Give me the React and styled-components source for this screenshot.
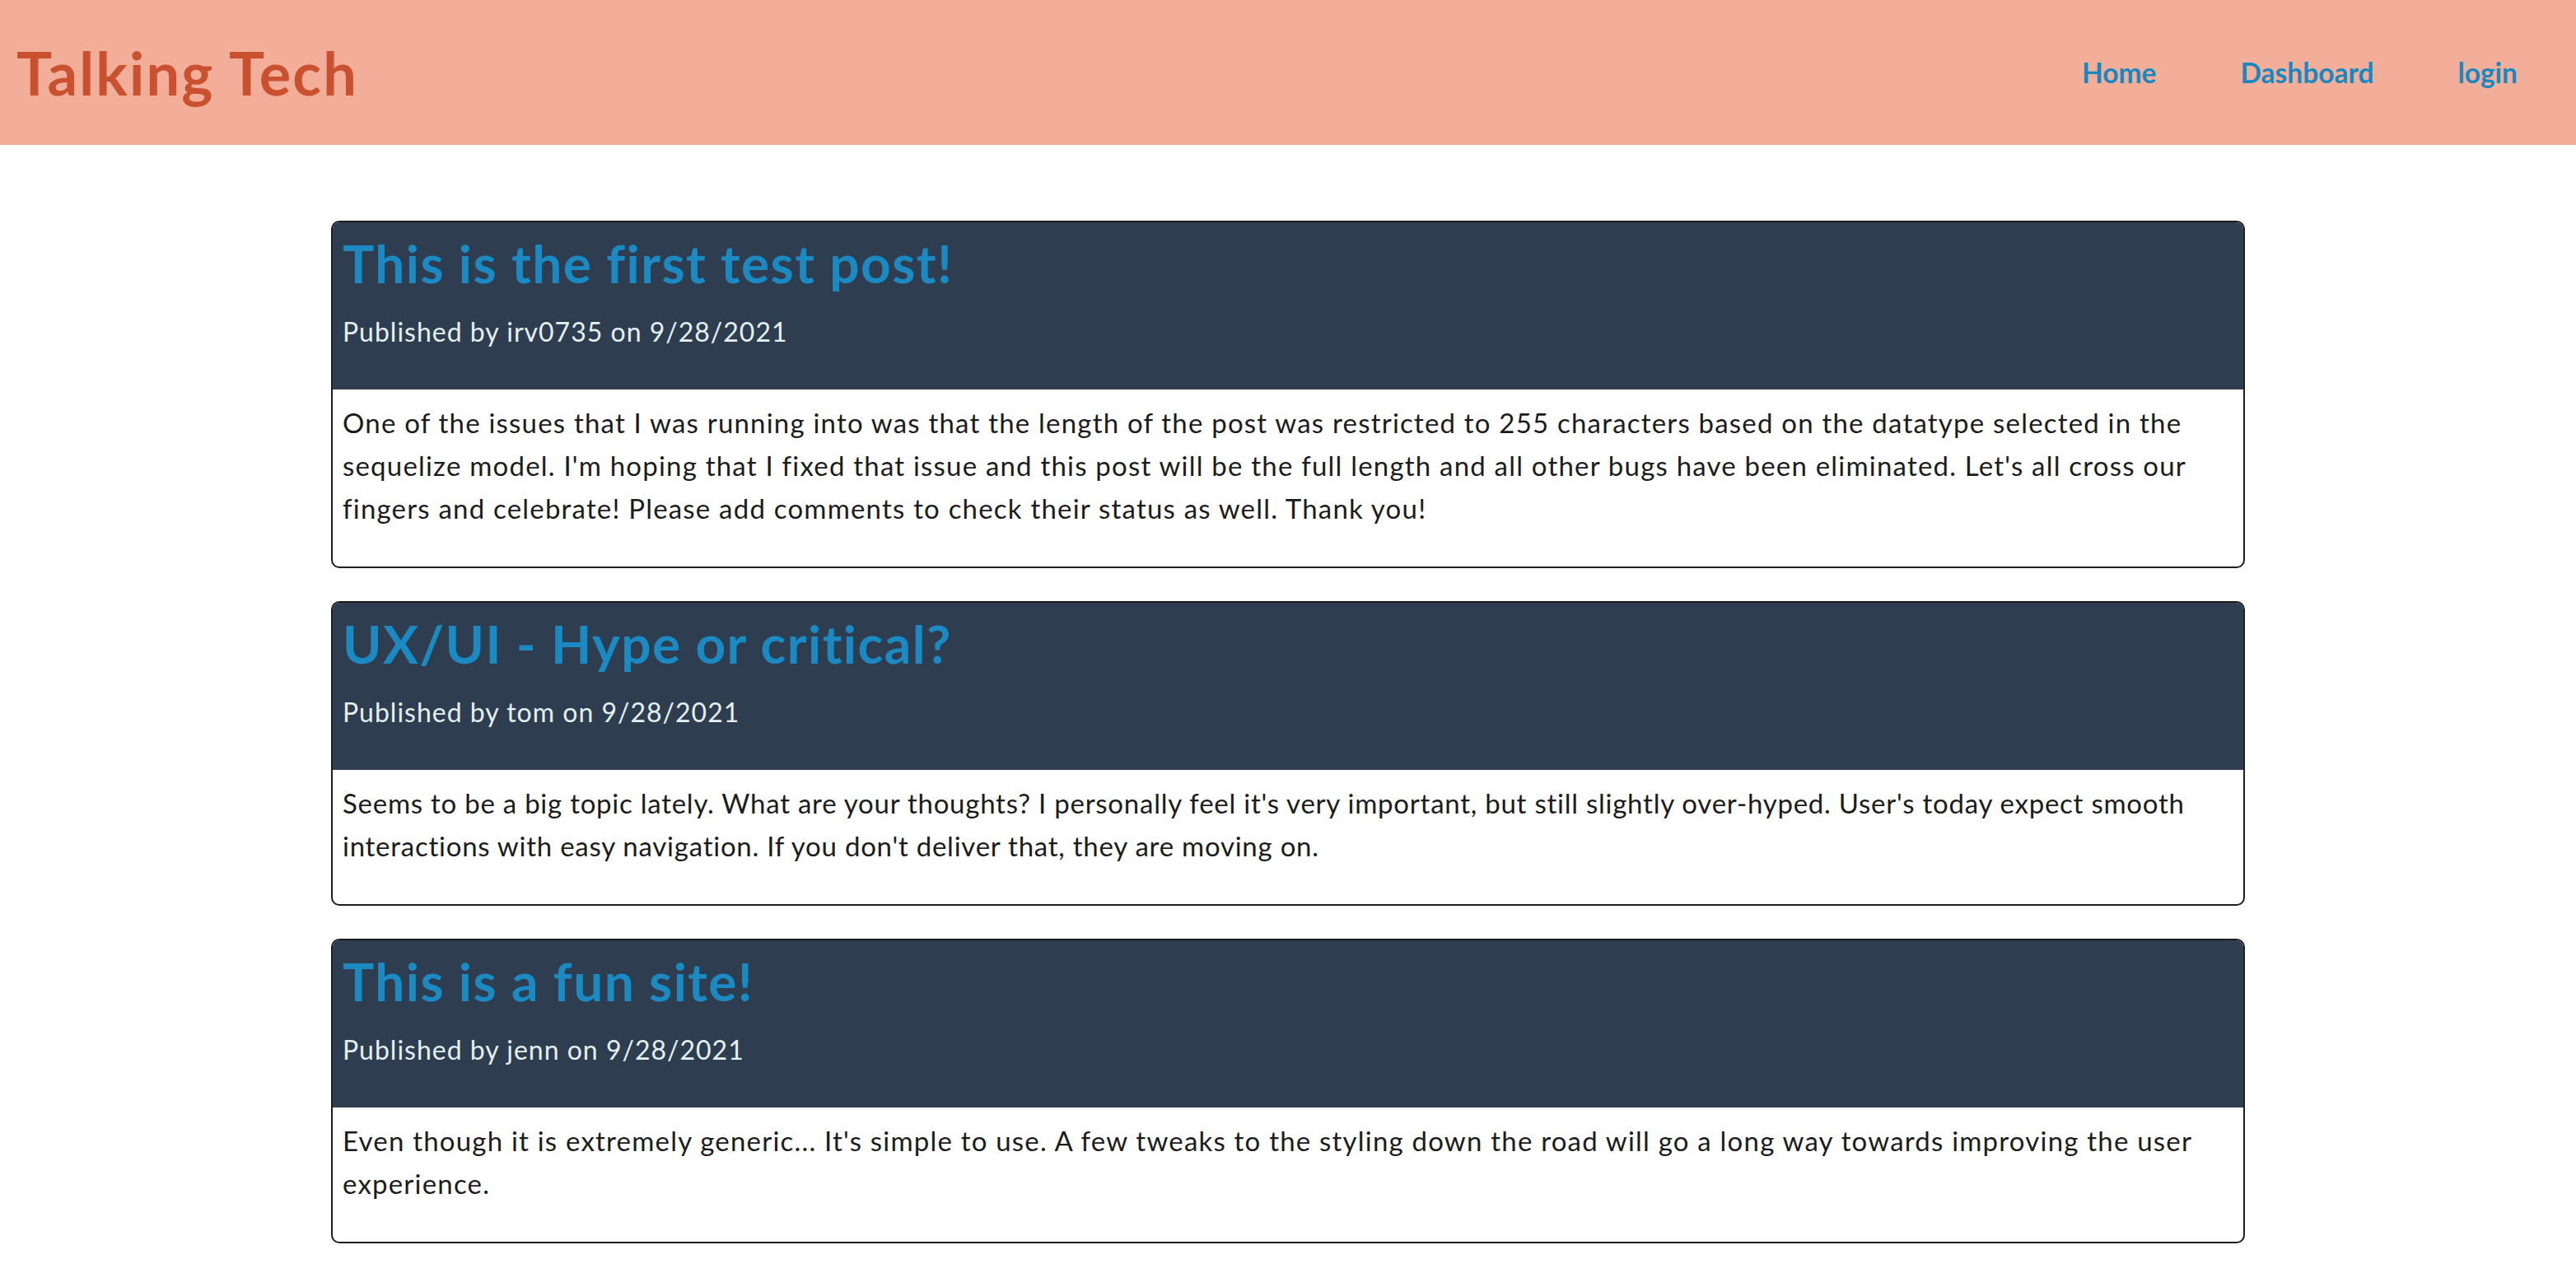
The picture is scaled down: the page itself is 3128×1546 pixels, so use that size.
import React from "react";
import styled, { createGlobalStyle } from "styled-components";

const GlobalStyle = createGlobalStyle`
  * {
    box-sizing: border-box;
  }
  body {
    margin: 0;
    background: #ffffff;
    font-family: "Segoe UI", Lato, "Open Sans", sans-serif;
    color: #1c1c1c;
  }
`;

const posts = [
  {
    title: "This is the first test post!",
    author: "irv0735",
    date: "9/28/2021",
    body: "One of the issues that I was running into was that the length of the post was restricted to 255 characters based on the datatype selected in the sequelize model. I'm hoping that I fixed that issue and this post will be the full length and all other bugs have been eliminated. Let's all cross our fingers and celebrate! Please add comments to check their status as well. Thank you!",
  },
  {
    title: "UX/UI - Hype or critical?",
    author: "tom",
    date: "9/28/2021",
    tracking: 0.75,
    body: "Seems to be a big topic lately. What are your thoughts? I personally feel it's very important, but still slightly over-hyped. User's today expect smooth interactions with easy navigation. If you don't deliver that, they are moving on.",
  },
  {
    title: "This is a fun site!",
    author: "jenn",
    date: "9/28/2021",
    body: "Even though it is extremely generic... It's simple to use. A few tweaks to the styling down the road will go a long way towards improving the user experience.",
  },
];

const App = () => {
  return (
    <>
      <GlobalStyle />
      <Header>
        <Logo>Talking Tech</Logo>
        <Nav>
          <NavLink href="#">Home</NavLink>
          <NavLink href="#">Dashboard</NavLink>
          <NavLink href="#">login</NavLink>
        </Nav>
      </Header>

      <Main>
        {posts.map((post) => (
          <Post key={post.title}>
            <PostHead>
              <PostTitle>{post.title}</PostTitle>
              <Meta>
                Published by {post.author} on {post.date}
              </Meta>
            </PostHead>
            <PostBody $tracking={post.tracking}>
              <p>{post.body}</p>
            </PostBody>
          </Post>
        ))}
      </Main>
    </>
  );
};

export default App;

const Header = styled.header`
  height: 176px;
  background-color: #f2ae99;
  display: flex;
  align-items: center;
  justify-content: space-between;
  padding: 0 20px;
`;

const Logo = styled.h1`
  margin: 0;
  font-size: 72px;
  letter-spacing: 2.2px;
  font-weight: 700;
  color: #c9512f;
`;

const Nav = styled.nav`
  display: flex;
  align-items: center;
  gap: 102px;
  padding-right: 51px;
`;

const NavLink = styled.a`
  font-size: 33.5px;
  font-weight: 700;
  color: #1888c0;
  text-decoration: none;
`;

const Main = styled.main`
  width: 2324px;
  margin: 92px auto 40px;
  display: flex;
  flex-direction: column;
  gap: 40px;
`;

const Post = styled.article`
  border: 2px solid #1e1e1e;
  border-radius: 10px;
  overflow: hidden;
  background: #ffffff;
`;

const PostHead = styled.div`
  background-color: #2e3d50;
  padding: 12px 12px 45px;
`;

const PostTitle = styled.h2`
  margin: 0 0 18px;
  font-size: 64px;
  letter-spacing: 1.4px;
  line-height: 1.2;
  font-weight: 700;
  color: #1b8ac2;
`;

const Meta = styled.p`
  margin: 0;
  font-size: 32px;
  letter-spacing: 1px;
  line-height: 1.6;
  color: #e4f0f2;
`;

const PostBody = styled.div`
  padding: 14px 4px 45px 12px;
  p {
    margin: 0;
    font-size: 33px;
    letter-spacing: ${(p) => p.$tracking ?? 1.2}px;
    line-height: 52px;
    color: #1c1c1c;
  }
`;
